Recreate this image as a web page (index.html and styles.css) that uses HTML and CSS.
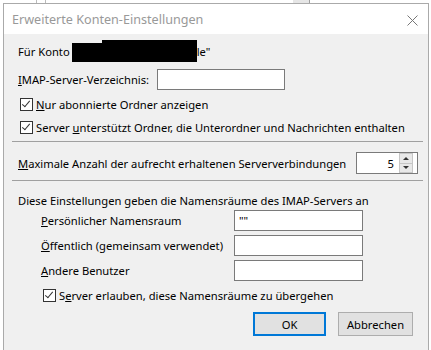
FILE: index.html
```html
<!DOCTYPE html>
<html>
  <head>
    <title>Erweiterte Konten-Einstellungen</title>
    <link rel="stylesheet" href="styles.css">
  </head>
  <body>
    <div class="behind">
      <span class="behind-icon"></span>
      <span class="behind-date">22.11.2019 23:41</span>
      <span class="behind-scroll"></span>
    </div>
    <div class="dialog">
      <div class="titlebar">
        <span class="title">Erweiterte Konten-Einstellungen</span>
        <svg class="close" width="11" height="11" viewBox="0 0 11 11">
          <path d="M0.5 0.5 L10.5 10.5 M10.5 0.5 L0.5 10.5" stroke="#777" stroke-width="1" fill="none" />
        </svg>
      </div>

      <div class="client">
        <div class="row account">
          <span>Für Konto</span>
          <span class="redacted"></span>
          <span>le"</span>
        </div>

        <div class="row folder">
          <label><u>I</u>MAP-Server-Verzeichnis:</label>
          <span class="textbox folder-box"></span>
        </div>

        <div class="row check first">
          <span class="checkbox checked"></span>
          <span><u>N</u>ur abonnierte Ordner anzeigen</span>
        </div>
        <div class="row check second">
          <span class="checkbox checked"></span>
          <span>Server <u>u</u>nterstützt Ordner, die Unterordner und Nachrichten enthalten</span>
        </div>

        <div class="separator sep-one"></div>

        <div class="row connections">
          <label><u>M</u>aximale Anzahl der aufrecht erhaltenen Serververbindungen</label>
          <span class="spinbox">
            <span class="spin-value">5</span>
            <span class="spin-buttons">
              <span class="spin-up"></span>
              <span class="spin-down"></span>
            </span>
          </span>
        </div>

        <div class="separator sep-two"></div>

        <div class="row namespaces-info">
          Diese Einstellungen geben die Namensräume des IMAP-Servers an
        </div>

        <div class="row namespace first-ns">
          <label><u>P</u>ersönlicher Namensraum</label>
          <span class="textbox ns-box">""</span>
        </div>
        <div class="row namespace">
          <label><u>Ö</u>ffentlich (gemeinsam verwendet)</label>
          <span class="textbox ns-box"></span>
        </div>
        <div class="row namespace">
          <label><u>A</u>ndere Benutzer</label>
          <span class="textbox ns-box"></span>
        </div>

        <div class="row check override">
          <span class="checkbox checked"></span>
          <span>S<u>e</u>rver erlauben, diese Namensräume zu übergehen</span>
        </div>

        <div class="buttons">
          <button class="btn default">OK</button>
          <button class="btn">Abbrechen</button>
        </div>
      </div>
    </div>
  </body>
</html>
```

FILE: styles.css
```css
body {
  margin: 0;
  width: 431px;
  height: 350px;
  overflow: hidden;
  background-color: #fff;
  font-family: "Noto Sans", "Open Sans", sans-serif;
  font-size: 11.2px;
  color: #000;
}
.behind {
  height: 3px;
  overflow: hidden;
  position: relative;
}
.behind-icon {
  position: absolute;
  left: 36px;
  top: -8px;
  width: 8px;
  height: 10px;
  border: 1px solid #bbb;
}
.behind-date {
  position: absolute;
  left: 55px;
  top: -11px;
  font-size: 12px;
  line-height: 12px;
  color: #333;
}
.behind-scroll {
  position: absolute;
  left: 293px;
  top: 0;
  width: 16px;
  height: 3px;
  background-color: #e6e6e6;
  border-right: 1px solid #a0a0a0;
}
.dialog {
  margin-left: 3px;
  width: 424px;
  height: 346px;
  border: 1px solid #aaaaaa;
  border-bottom: none;
  background-color: #f0f0f0;
}
.titlebar {
  height: 30px;
  background-color: #fff;
  display: flex;
  align-items: center;
  justify-content: space-between;
  padding: 0 10px 0 8px;
}
.title {
  color: #999;
  font-size: 12.6px;
}
.close {
  margin-top: 2px;
}
.client {
  display: flex;
  flex-direction: column;
  padding: 0 10px 0 14px;
}
.row {
  display: flex;
  align-items: center;
  white-space: nowrap;
}
.account {
  height: 22px;
  margin-top: 6px;
}
.redacted {
  flex-shrink: 0;
  width: 125px;
  height: 22px;
  margin-left: 2px;
  background: linear-gradient(to right, #f0f0f0 30px, #000 30px);
  position: relative;
}
.redacted::after {
  content: "";
  position: absolute;
  left: 0;
  right: 0;
  top: 3px;
  bottom: 0;
  background-color: #000;
}
.folder {
  height: 21px;
  margin-top: 7px;
}
.textbox {
  display: inline-flex;
  align-items: center;
  flex-shrink: 0;
  box-sizing: border-box;
  height: 21px;
  border: 1px solid #7a7a7a;
  background-color: #fff;
  padding-left: 4px;
}
.folder-box {
  width: 128px;
  margin-left: 8px;
}
.check {
  height: 20px;
  padding-left: 2px;
}
.check.first {
  margin-top: 4px;
}
.check.second {
  margin-top: 3px;
}
.checkbox {
  flex-shrink: 0;
  box-sizing: border-box;
  width: 13px;
  height: 13px;
  border: 1px solid #333;
  background-color: #fff;
  margin-right: 3px;
  position: relative;
}
.checkbox.checked::after {
  content: "";
  position: absolute;
  left: 3px;
  top: 0px;
  width: 3px;
  height: 7px;
  border-right: 1px solid #333;
  border-bottom: 1px solid #333;
  transform: rotate(40deg);
}
.separator {
  height: 1px;
  background-color: #a0a0a0;
  margin-left: -6px;
  margin-right: -5px;
}
.sep-one {
  margin-top: 4px;
}
.connections {
  height: 22px;
  margin-top: 10px;
  justify-content: space-between;
}
.spinbox {
  flex-shrink: 0;
  box-sizing: border-box;
  width: 62px;
  height: 22px;
  border: 1px solid #7a7a7a;
  background-color: #fff;
  display: flex;
  align-items: center;
  justify-content: flex-end;
  padding: 1px;
}
.spin-value {
  margin-right: 5px;
}
.spin-buttons {
  display: flex;
  flex-direction: column;
  width: 12px;
  height: 18px;
  border: 1px solid #c6c6c6;
  margin-right: 3px;
}
.spin-up,
.spin-down {
  flex: 1;
  background-color: #e8e8e8;
  display: flex;
  align-items: center;
  justify-content: center;
}
.spin-down {
  border-top: 1px solid #c6c6c6;
}
.spin-up::after {
  content: "";
  border-left: 3px solid transparent;
  border-right: 3px solid transparent;
  border-bottom: 3px solid #333;
}
.spin-down::after {
  content: "";
  border-left: 3px solid transparent;
  border-right: 3px solid transparent;
  border-top: 3px solid #333;
}
.sep-two {
  margin-top: 6px;
}
.namespaces-info {
  height: 20px;
  margin-top: 9px;
}
.namespace {
  height: 21px;
  margin-top: 4px;
  padding-left: 23px;
}
.namespace.first-ns {
  margin-top: 0;
}
.namespace label {
  flex-shrink: 0;
  width: 193px;
}
.ns-box {
  width: 129px;
}
.check.override {
  margin-top: 4px;
  padding-left: 25px;
}
.buttons {
  display: flex;
  justify-content: flex-end;
  gap: 12px;
  margin-top: 7px;
  padding-right: 5px;
}
.btn {
  box-sizing: border-box;
  height: 24px;
  width: 75px;
  border: 1px solid #adadad;
  background-color: #e1e1e1;
  font-family: "Noto Sans", "Open Sans", sans-serif;
  font-size: 11.2px;
  color: #000;
  padding: 0;
}
.btn.default {
  width: 73px;
  border: 2px solid #0078d7;
}
```
